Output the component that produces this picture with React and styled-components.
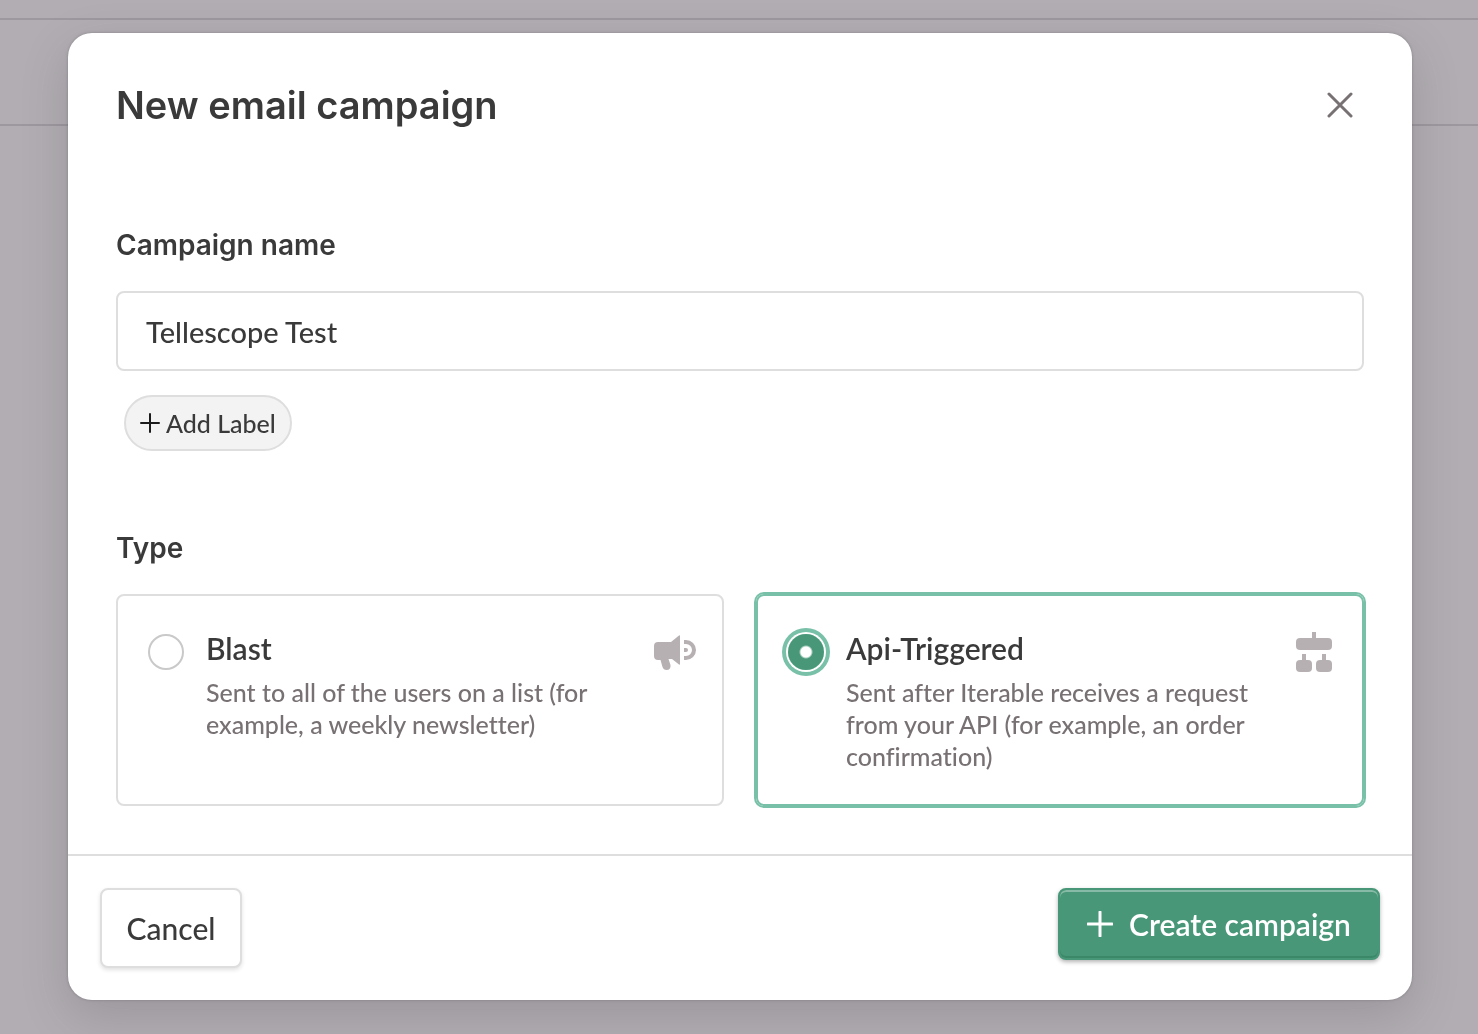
import React, { useState } from "react";
import styled, { createGlobalStyle, css } from "styled-components";

const c = {
  ink: "#3b3a3b",
  muted: "#787174",
  line: "#dedede",
  icon: "#b7b0b3",
  green: "#479778",
  mint: "#78c0a8",
};

const GlobalStyle = createGlobalStyle`
  *, *::before, *::after { box-sizing: border-box; }
  body {
    margin: 0;
    background: #ffffff;
    color: ${c.ink};
    font-family: Lato, "Liberation Sans", sans-serif;
    font-variant-ligatures: none;
  }
  button, input { font: inherit; color: inherit; }
`;

const Page = styled.div`
  min-height: 100vh;
`;

const PageBar = styled.div`
  height: ${(p) => p.$height}px;
  border-bottom: 2px solid #d7d3d8;
`;

const Overlay = styled.div`
  position: fixed;
  inset: 0;
  overflow: auto;
  padding: 33px 66px 34px 68px;
  background: rgba(99, 92, 102, 0.5);
`;

const Modal = styled.form`
  background: #ffffff;
  border-radius: 24px;
  box-shadow: 0 16px 48px rgba(50, 44, 54, 0.18), 0 0 3px rgba(50, 44, 54, 0.3);
`;

const Header = styled.header`
  display: flex;
  align-items: center;
  justify-content: space-between;
  padding: 48px 48px 0;
`;

const Title = styled.h1`
  margin: 0;
  font: 600 38px/48px Inter, "Liberation Sans", sans-serif;
`;

const CloseButton = styled.button`
  display: grid;
  place-items: center;
  width: 48px;
  height: 48px;
  padding: 0;
  border: 0;
  background: none;
  color: ${c.muted};
  cursor: pointer;
`;

const Body = styled.div`
  display: flex;
  flex-direction: column;
  gap: 79px;
  padding: 98px 48px 48px;
`;

const labelText = css`
  display: block;
  margin: 0 0 28px;
  padding: 0;
  font: 600 28px/36px Inter, "Liberation Sans", sans-serif;
`;

const FieldLabel = styled.label`
  ${labelText}
`;

const Legend = styled.legend`
  ${labelText}
`;

const Field = styled.div``;

const Fieldset = styled.fieldset`
  min-width: 0;
  margin: 0;
  padding: 0;
  border: 0;
`;

const TextInput = styled.input`
  display: block;
  width: 100%;
  height: 80px;
  padding: 0 28px;
  border: 2px solid ${c.line};
  border-radius: 8px;
  background: #ffffff;
  font-size: 29px;
  font-weight: 500;
  outline: none;
`;

const Pill = styled.button`
  display: flex;
  align-items: center;
  gap: 6px;
  height: 56px;
  min-width: 168px;
  margin: 24px 8px 0;
  padding: 0 12px 0 14px;
  border: 2px solid ${c.line};
  border-radius: 28px;
  background: #f3f3f3;
  font-size: 25px;
  font-weight: 500;
  cursor: pointer;

  svg {
    color: #1c1b1c;
  }
`;

const Options = styled.div`
  display: grid;
  grid-template-columns: 1fr 1fr;
  gap: 32px;
`;

const OptionCard = styled.label`
  display: flex;
  align-items: flex-start;
  padding: 32px 24px 32px 30px;
  border: 2px solid ${(p) => (p.$selected ? c.mint : c.line)};
  border-radius: 8px;
  box-shadow: ${(p) => (p.$selected ? `0 0 0 2px ${c.mint}` : "none")};
  cursor: pointer;
`;

const Radio = styled.input`
  appearance: none;
  flex: none;
  width: 36px;
  height: 36px;
  margin: 6px 22px 0 0;
  border: 2px solid #c9c9c9;
  border-radius: 50%;
  background: #ffffff;

  &:checked {
    border: 0;
    background: radial-gradient(circle, #ffffff 5px, ${c.green} 7px);
    box-shadow: 0 0 0 2px #ffffff, 0 0 0 6px ${c.mint};
  }
`;

const OptionText = styled.span`
  flex: 1;
  min-width: 0;
  display: grid;
  gap: 8px;
`;

const OptionTitle = styled.span`
  font-size: 30px;
  line-height: 40px;
  font-weight: 600;
`;

const OptionNote = styled.span`
  color: ${c.muted};
  font-size: 25px;
  line-height: 32px;
  font-weight: 500;
`;

const OptionIcon = styled.svg`
  flex: none;
  width: 48px;
  height: 48px;
  fill: ${c.icon};
`;

const Footer = styled.footer`
  display: flex;
  align-items: flex-start;
  justify-content: space-between;
  padding: 32px;
  border-top: 2px solid ${c.line};
`;

const Button = styled.button`
  display: flex;
  align-items: center;
  justify-content: center;
  border-radius: 8px;
  font-size: 30px;
  font-weight: 500;
  cursor: pointer;
`;

const CancelButton = styled(Button)`
  height: 80px;
  min-width: 142px;
  padding: 0 24px;
  border: 2px solid ${c.line};
  background: #ffffff;
  box-shadow: 0 2px 4px rgba(0, 0, 0, 0.12);
`;

const CreateButton = styled(Button)`
  gap: 16px;
  height: 72px;
  min-width: 322px;
  padding: 0 24px;
  border: 2px solid ${c.green};
  background: ${c.green};
  color: #ffffff;
  font-weight: 600;
  box-shadow: inset 0 2px 0 rgba(255, 255, 255, 0.35), inset 0 -2px 0 rgba(0, 60, 30, 0.16),
    0 2px 4px rgba(0, 0, 0, 0.3);
`;

function Plus({ size, stroke }) {
  const m = size / 2;
  return (
    <svg width={size} height={size} fill="none" stroke="currentColor" strokeWidth={stroke} strokeLinecap="round" aria-hidden="true">
      <path d={`M${m} 1V${size - 1}M1 ${m}H${size - 1}`} />
    </svg>
  );
}

function Megaphone() {
  return (
    <OptionIcon viewBox="0 0 48 48" aria-hidden="true">
      <path d="M8 14H21L29 7.500Q30 7 30 8V36Q30 37 29 36.500L22 31H18.500L20.500 37Q21 42 16.500 42Q13.500 42 12.500 39L10.500 32H8Q4 32 4 28V18Q4 14 8 14Z" />
      <path d="M34 14H36A8 8 0 0 1 36 30H34" fill="none" stroke={c.icon} strokeWidth="4" />
      <path d="M34 20H36Q38 20 38 22T36 24H34Z" />
    </OptionIcon>
  );
}

function Hierarchy() {
  return (
    <OptionIcon viewBox="0 0 48 48" aria-hidden="true">
      <path d="M22 4H26V12H22ZM12 26H16V34H12ZM32 26H36V34H32Z" />
      <rect x="6" y="10" width="36" height="12" rx="4" />
      <rect x="6" y="32" width="16" height="12" rx="4" />
      <rect x="26" y="32" width="16" height="12" rx="4" />
    </OptionIcon>
  );
}

const types = [
  {
    id: "blast",
    title: "Blast",
    note: "Sent to all of the users on a list (for example, a weekly newsletter)",
    Icon: Megaphone,
  },
  {
    id: "api",
    title: "Api-Triggered",
    note: "Sent after Iterable receives a request from your API (for example, an order confirmation)",
    Icon: Hierarchy,
  },
];

export default function App() {
  const [name, setName] = useState("Tellescope Test");
  const [type, setType] = useState("api");

  return (
    <Page>
      <GlobalStyle />
      <PageBar $height={20} />
      <PageBar $height={106} />
      <Overlay>
        <Modal role="dialog" aria-labelledby="dialog-title" onSubmit={(e) => e.preventDefault()}>
          <Header>
            <Title id="dialog-title">New email campaign</Title>
            <CloseButton type="button" aria-label="Close">
              <svg width="26" height="26" fill="none" stroke="currentColor" strokeWidth="3" strokeLinecap="round" aria-hidden="true">
                <path d="M2 2L24 24M24 2L2 24" />
              </svg>
            </CloseButton>
          </Header>
          <Body>
            <Field>
              <FieldLabel htmlFor="campaign-name">Campaign name</FieldLabel>
              <TextInput id="campaign-name" type="text" value={name} onChange={(e) => setName(e.target.value)} />
              <Pill type="button">
                <Plus size={20} stroke={2} />
                Add Label
              </Pill>
            </Field>
            <Fieldset>
              <Legend>Type</Legend>
              <Options>
                {types.map(({ id, title, note, Icon }) => (
                  <OptionCard key={id} htmlFor={id} $selected={type === id}>
                    <Radio id={id} type="radio" name="type" checked={type === id} onChange={() => setType(id)} />
                    <OptionText>
                      <OptionTitle>{title}</OptionTitle>
                      <OptionNote>{note}</OptionNote>
                    </OptionText>
                    <Icon />
                  </OptionCard>
                ))}
              </Options>
            </Fieldset>
          </Body>
          <Footer>
            <CancelButton type="button">Cancel</CancelButton>
            <CreateButton type="submit">
              <Plus size={26} stroke={3} />
              Create campaign
            </CreateButton>
          </Footer>
        </Modal>
      </Overlay>
    </Page>
  );
}
